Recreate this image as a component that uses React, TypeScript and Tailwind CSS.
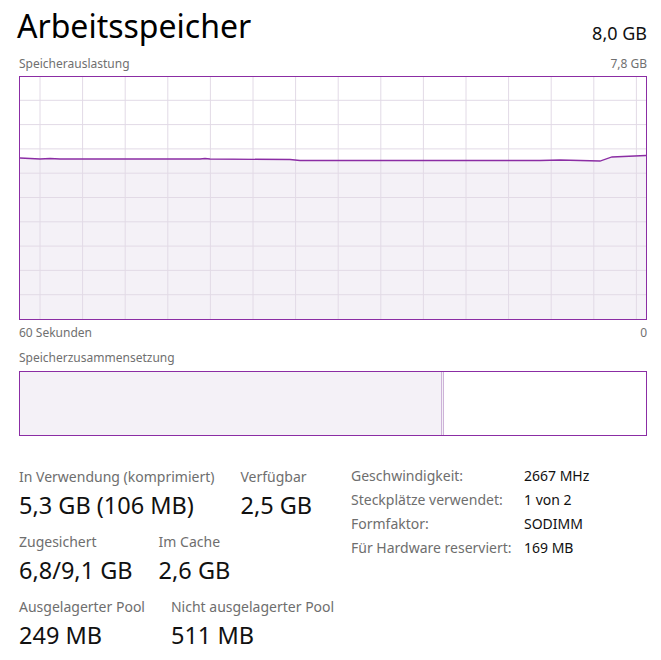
import React from "react";

const FONT = { fontFamily: '"Noto Sans", "Open Sans", sans-serif' };

// points of the usage line, relative to the inner chart area (origin at 20,77)
const linePts: [number, number][] = [
  [0, 81], [20, 82], [30, 81.5], [40, 82], [180, 82], [185, 81.5], [190, 82],
  [270, 82.5], [280, 83.5], [520, 83.5], [540, 83], [580, 84], [592, 80], [626, 78.5],
];

function UsageChart() {
  const w = 626;
  const h = 242;
  const vLines = Array.from({ length: 15 }, (_, i) => 20 + i * 42.6);
  const hLines = Array.from({ length: 9 }, (_, i) => 23.3 + i * 24.3);
  const line = linePts.map(([x, y], i) => `${i ? "L" : "M"}${x} ${y}`).join(" ");
  const area = `${line} L${w} ${h} L0 ${h} Z`;
  return (
    <div className="border border-[#8b2da4] h-[244px] w-[628px]">
      <svg width={w} height={h} className="block">
        <path d={area} fill="#f4f1f7" />
        {vLines.map((x) => (
          <line key={x} x1={x} x2={x} y1={0} y2={h} stroke="#e2dae6" strokeWidth={1} />
        ))}
        {hLines.map((y) => (
          <line key={y} x1={0} x2={w} y1={y} y2={y} stroke="#e2dae6" strokeWidth={1} />
        ))}
        <path d={line} fill="none" stroke="#8b2da4" strokeWidth={1.3} />
      </svg>
    </div>
  );
}

function Stat({ label, value }: { label: string; value: string }) {
  return (
    <div className="flex flex-col">
      <span className="text-[14px] leading-[20px] text-[#6e6e6e] mb-[2px]">{label}</span>
      <span className="text-[23.5px] leading-[32px] text-[#111]">{value}</span>
    </div>
  );
}

const details = [
  ["Geschwindigkeit:", "2667 MHz"],
  ["Steckplätze verwendet:", "1 von 2"],
  ["Formfaktor:", "SODIMM"],
  ["Für Hardware reserviert:", "169 MB"],
];

export default function App() {
  return (
    <div className="min-h-[660px] w-[661px] bg-white" style={FONT}>
      <div className="ml-[19px] w-[628px] pt-[4px]">
        {/* Header */}
        <div className="flex items-end justify-between">
          <h1 className="text-[32px] leading-[44px] text-black -ml-[2px]">Arbeitsspeicher</h1>
          <span className="text-[18px] leading-[28px] text-[#111] mb-[1px]">8,0 GB</span>
        </div>
        <div className="flex justify-between text-[12px] leading-[16px] text-[#707070] mt-[8px] mb-[4px]">
          <span>Speicherauslastung</span>
          <span>7,8 GB</span>
        </div>

        <UsageChart />

        <div className="flex justify-between text-[12px] leading-[16px] text-[#707070] mt-[5px]">
          <span>60 Sekunden</span>
          <span>0</span>
        </div>
        <div className="text-[12px] leading-[16px] text-[#707070] mt-[9px] mb-[5px]">
          Speicherzusammensetzung
        </div>

        {/* Composition */}
        <div className="flex h-[65px] w-[628px] border border-[#8b2da4]">
          <div className="w-[421px] bg-[#f4f1f7]" />
          <div className="w-[3px] border-x border-[#cdb3d8] bg-[#f4f1f7]" />
          <div className="flex-1 bg-white" />
        </div>

        {/* Stats */}
        <div className="flex items-start mt-[31px]">
          <div className="flex flex-col gap-[11px] w-[332px]">
            <div className="flex gap-[26px]">
              <Stat label="In Verwendung (komprimiert)" value="5,3 GB (106 MB)" />
              <Stat label="Verfügbar" value="2,5 GB" />
            </div>
            <div className="flex gap-[26px]">
              <Stat label="Zugesichert" value="6,8/9,1 GB" />
              <Stat label="Im Cache" value="2,6 GB" />
            </div>
            <div className="flex gap-[26px]">
              <Stat label="Ausgelagerter Pool" value="249 MB" />
              <Stat label="Nicht ausgelagerter Pool" value="511 MB" />
            </div>
          </div>
          <div className="grid grid-cols-[173px_1fr] content-start text-[14px] leading-[24px] -mt-[3px]">
            {details.map(([k, v]) => (
              <React.Fragment key={k}>
                <span className="text-[#6e6e6e]">{k}</span>
                <span className="text-[#111]">{v}</span>
              </React.Fragment>
            ))}
          </div>
        </div>
      </div>
    </div>
  );
}
